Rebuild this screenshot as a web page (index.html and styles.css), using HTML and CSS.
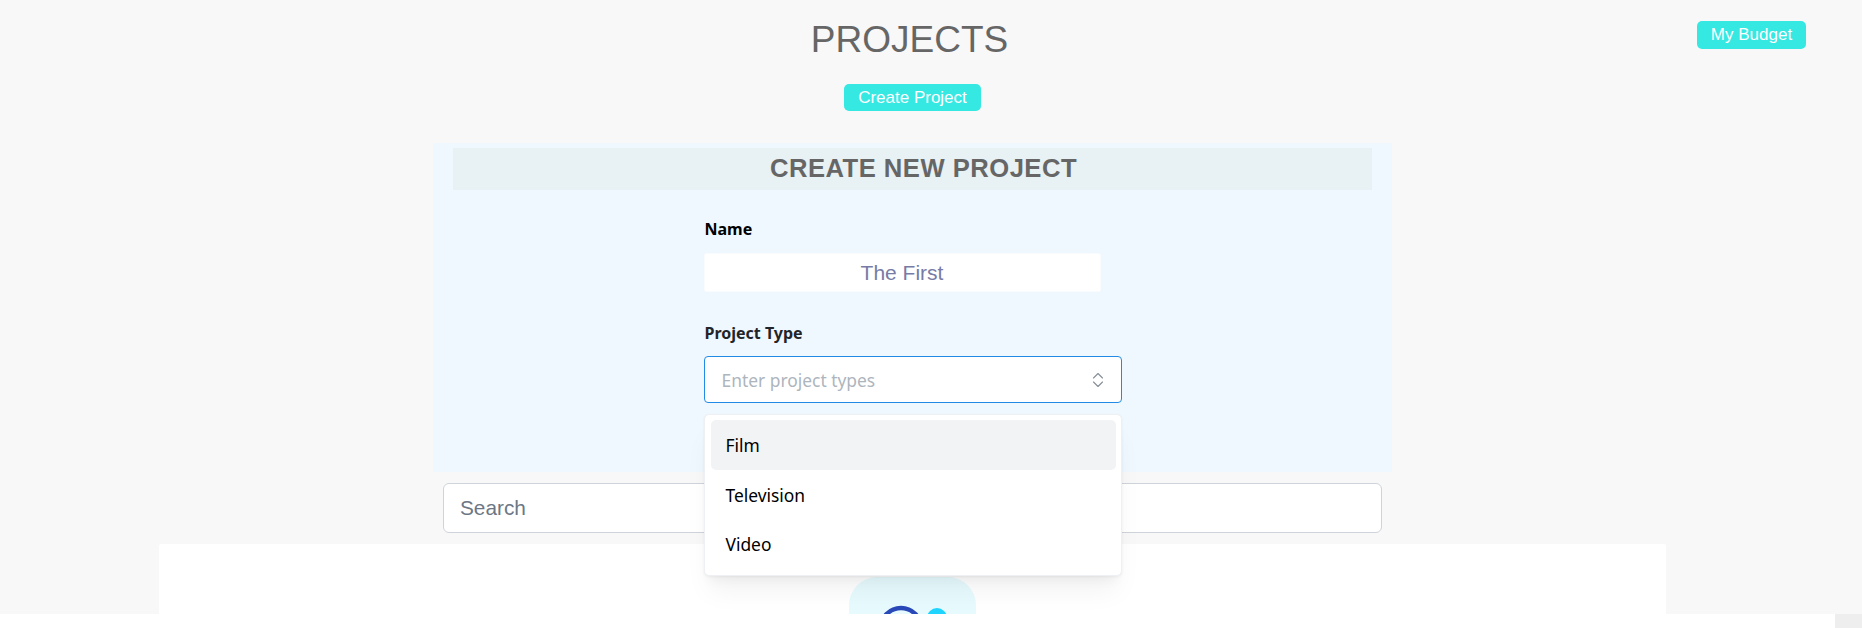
FILE: index.html
```html
<!DOCTYPE html>
<html lang="en">
<head>
    <meta charset="UTF-8">
    <meta name="viewport" content="width=device-width, initial-scale=1.0">
    <title>Projects</title>
    <link rel="stylesheet" href="styles.css">
</head>
<body>
    <main class="page">
        <div class="page-inner">
            <header class="top">
                <div></div>
                <div class="top-center">
                    <h1>PROJECTS</h1>
                    <button class="teal-button create-button">Create Project</button>
                </div>
                <div class="top-right">
                    <button class="teal-button budget-button">My Budget</button>
                </div>
            </header>

            <section class="form-panel">
                <h2>CREATE NEW PROJECT</h2>
                <div class="form-fields">
                    <label class="field-label" for="name">Name</label>
                    <input class="name-input" type="text" id="name" value="The First">

                    <label class="field-label type-label" for="ptype">Project Type</label>
                    <div class="select-wrap">
                        <input class="type-input" type="text" id="ptype" placeholder="Enter project types" readonly>
                        <svg class="select-icon" viewBox="0 0 12 16" width="12" height="16" fill="none">
                            <path d="M1.5 6 6 1.5 10.5 6M1.5 10 6 14.5 10.5 10" stroke="#868e96" stroke-width="1.1" stroke-linecap="round" stroke-linejoin="round"/>
                        </svg>
                        <ul class="dropdown">
                            <li class="dropdown-item active">Film</li>
                            <li class="dropdown-item">Television</li>
                            <li class="dropdown-item">Video</li>
                        </ul>
                    </div>
                </div>
            </section>

            <input class="search-input" type="text" placeholder="Search">

            <section class="project-card">
                <div class="project-logo">
                    <svg viewBox="0 0 127 60" width="127" height="60" fill="none">
                        <circle cx="52" cy="51" r="20" stroke="#2a49b8" stroke-width="4.5"/>
                        <circle cx="88" cy="41" r="10" fill="#1fd5ff"/>
                    </svg>
                </div>
            </section>
        </div>
    </main>
    <div class="bottom-bar"><span class="scroll-corner"></span></div>
</body>
</html>
```

FILE: styles.css
```css
/* General Reset */
* {
    margin: 0;
    padding: 0;
    box-sizing: border-box;
}

html, body {
    height: 100%;
    overflow: hidden;
    background-color: #fff;
}

body {
    font-family: "Liberation Sans", Arial, sans-serif;
    color: #666;
}

.page {
    height: 614px;
    overflow: hidden;
    background-color: #f8f8f8;
}

.page-inner {
    width: 1825px;
}

.bottom-bar {
    display: flex;
    justify-content: flex-end;
    height: 14px;
}

.scroll-corner {
    width: 27px;
    background-color: #eee;
}

/* Header */
.top {
    display: grid;
    grid-template-columns: 1fr auto 1fr;
    padding-top: 19px;
}

.top-center {
    display: flex;
    flex-direction: column;
    align-items: center;
}

.top-right {
    display: flex;
    justify-content: flex-end;
    align-items: flex-start;
    padding-right: 19px;
    margin-top: 2px;
}

h1 {
    padding-right: 6px;
    font-size: 37px;
    line-height: 42px;
    font-weight: 400;
    color: #666;
}

.teal-button {
    font-family: "Liberation Sans", Arial, sans-serif;
    font-size: 17px;
    color: #fff;
    background-color: #36e8e2;
    border: none;
    border-radius: 5px;
    cursor: pointer;
}

.create-button {
    width: 137px;
    height: 27px;
    margin-top: 23px;
}

.budget-button {
    width: 109px;
    height: 28px;
}

/* Create form */
.form-panel {
    width: 959px;
    margin: 32px auto 0;
    padding: 5px 20px 69px;
    background-color: #eff7ff;
}

h2 {
    height: 42px;
    padding-left: 22px;
    font-size: 25.6px;
    line-height: 40px;
    letter-spacing: 0.5px;
    text-align: center;
    color: #666;
    background-color: #e8f1f4;
}

.form-fields {
    width: 418px;
    margin: 27px auto 0;
}

.field-label {
    display: block;
    height: 24px;
    margin-bottom: 12px;
    padding-left: 1px;
    font-family: "Noto Sans", sans-serif;
    font-size: 16px;
    line-height: 24px;
    font-weight: 700;
    color: #000;
}

.type-label {
    margin-top: 29px;
    margin-bottom: 11px;
    color: #212529;
}

.name-input {
    display: block;
    width: 397px;
    height: 39px;
    font-family: "Liberation Sans", Arial, sans-serif;
    font-size: 21px;
    text-align: center;
    color: #777ba6;
    background-color: #fff;
    border: 1px solid #fafbfd;
    border-radius: 2px;
    outline: none;
}

.select-wrap {
    position: relative;
}

.type-input {
    display: block;
    width: 418px;
    height: 47px;
    padding: 0 40px 0 17px;
    font-family: "Noto Sans", sans-serif;
    font-size: 17.4px;
    color: #212529;
    background-color: #fff;
    border: 1px solid #228be6;
    border-radius: 4px;
    outline: none;
}

.type-input::placeholder {
    color: #adb5bd;
    opacity: 1;
}

.select-icon {
    position: absolute;
    top: 16px;
    right: 18px;
}

.dropdown {
    position: absolute;
    top: 58px;
    left: 0;
    z-index: 10;
    width: 418px;
    padding: 5px 5px 6px 6px;
    list-style: none;
    background-color: #fff;
    border: 1px solid #eef0f3;
    border-radius: 5px;
    box-shadow: 0 1px 3px rgba(0, 0, 0, 0.05), 0 20px 25px -5px rgba(0, 0, 0, 0.05), 0 10px 10px -5px rgba(0, 0, 0, 0.04);
}

.dropdown-item {
    height: 49.5px;
    padding-left: 15px;
    font-family: "Noto Sans", sans-serif;
    font-size: 17.4px;
    line-height: 50px;
    color: #000;
    border-radius: 5px;
}

.dropdown-item.active {
    background-color: #f1f3f5;
}

/* Search and list */
.search-input {
    display: block;
    width: 939px;
    height: 50px;
    margin: 11px auto 0;
    padding: 0 16px;
    font-family: "Liberation Sans", Arial, sans-serif;
    font-size: 20.8px;
    background-color: #fff;
    border: 1px solid #ced4da;
    border-radius: 6px;
    outline: none;
}

.search-input::placeholder {
    color: #6c7785;
    opacity: 1;
}

.project-card {
    display: flex;
    justify-content: center;
    width: 1507px;
    height: 70px;
    margin: 11px auto 0;
    padding-top: 33px;
    overflow: hidden;
    background-color: #fff;
    border-radius: 2px 2px 0 0;
}

.project-logo {
    width: 127px;
    height: 127px;
    flex-shrink: 0;
    background-color: #e7fbfe;
    border-radius: 28px;
}
```
